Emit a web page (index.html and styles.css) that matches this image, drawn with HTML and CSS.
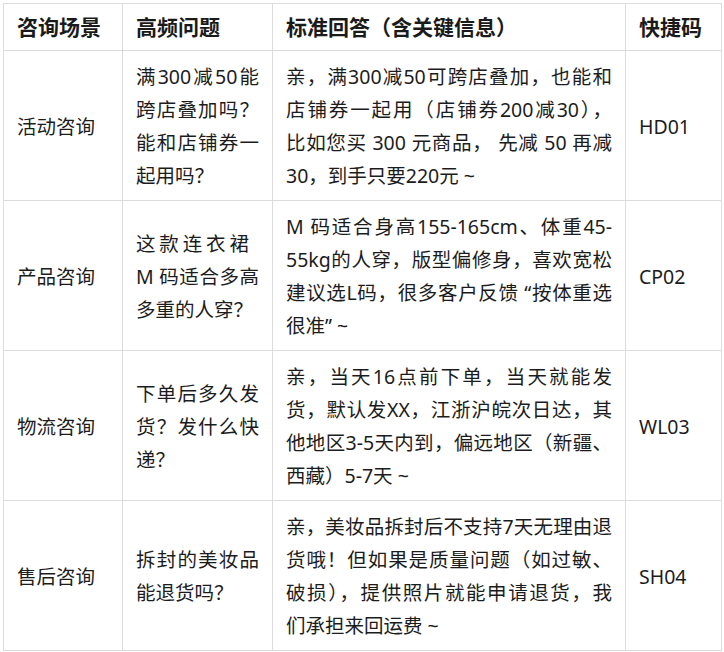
FILE: index.html
```html
<!DOCTYPE html>
<html lang="zh-CN">
<head>
<meta charset="utf-8">
<link rel="stylesheet" href="styles.css">
</head>
<body>
<div class="wrap">
<table class="faq">
  <colgroup>
    <col class="c1"><col class="c2"><col class="c3"><col class="c4">
  </colgroup>
  <thead>
    <tr class="head">
      <th>咨询场景</th><th>高频问题</th><th>标准回答（含关键信息）</th><th>快捷码</th>
    </tr>
  </thead>
  <tbody>
    <tr>
      <td>活动咨询</td>
      <td><span class="ln">满300减50能</span><span class="ln">跨店叠加吗？</span><span class="ln">能和店铺券一</span>起用吗？</td>
      <td><span class="ln">亲，满300减50可跨店叠加，也能和</span><span class="ln">店铺券一起用（店铺券200减30），</span><span class="ln">比如您买 300 元商品， 先减 50 再减</span>30，到手只要220元 ~</td>
      <td>HD01</td>
    </tr>
    <tr>
      <td>产品咨询</td>
      <td><span class="ln short">这款连衣裙</span><span class="ln">M 码适合多高</span>多重的人穿？</td>
      <td><span class="ln">M 码适合身高155-165cm、体重45-</span><span class="ln">55kg的人穿，版型偏修身，喜欢宽松</span><span class="ln">建议选L码，很多客户反馈 “按体重选</span>很准” ~</td>
      <td>CP02</td>
    </tr>
    <tr>
      <td>物流咨询</td>
      <td><span class="ln">下单后多久发</span><span class="ln">货？发什么快</span>递？</td>
      <td><span class="ln">亲，当天16点前下单，当天就能发</span><span class="ln">货，默认发XX，江浙沪皖次日达，其</span><span class="ln">他地区3-5天内到，偏远地区（新疆、</span>西藏）5-7天 ~</td>
      <td>WL03</td>
    </tr>
    <tr>
      <td>售后咨询</td>
      <td><span class="ln">拆封的美妆品</span>能退货吗？</td>
      <td><span class="ln">亲，美妆品拆封后不支持7天无理由退</span><span class="ln">货哦！但如果是质量问题（如过敏、</span><span class="ln">破损），提供照片就能申请退货，我</span>们承担来回运费 ~</td>
      <td>SH04</td>
    </tr>
  </tbody>
</table>
</div>
</body>
</html>
```
FILE: styles.css
```css
html, body {
  margin: 0;
  padding: 0;
  background: #ffffff;
}
.wrap {
  padding: 3px 0 0 3px;
}
.faq {
  border-collapse: collapse;
  table-layout: fixed;
  width: 718px;
  font-family: "Noto Sans", "Noto Sans CJK SC", sans-serif;
  font-size: 19.5px;
  line-height: 33px;
  color: #1c1c1c;
}
.c1 { width: 119px; }
.c2 { width: 150px; }
.c3 { width: 353px; }
.c4 { width: 96px; }
.faq th, .faq td {
  border: 1px solid #dcdcdc;
  padding: 9px 13px 8px;
  vertical-align: middle;
  text-align: left;
}
.faq th {
  font-weight: 700;
  font-size: 21px;
  padding: 7px 13px 6px;
  color: #1a1a1a;
}
.ln {
  display: block;
  white-space: nowrap;
  text-align: justify;
  text-align-last: justify;
}
.ln.short {
  padding-right: 10px;
}
```
